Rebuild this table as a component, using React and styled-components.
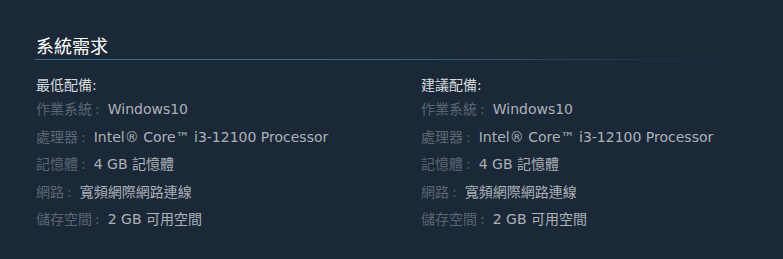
import React from "react";
import styled, { createGlobalStyle } from "styled-components";

const Global = createGlobalStyle`
  html, body {
    margin: 0;
    padding: 0;
    background: #1b2838;
  }
  body {
    font-family: "DejaVu Sans", "Noto Sans CJK TC", sans-serif;
    -webkit-font-smoothing: antialiased;
  }
`;

const Page = styled.div`
  width: 783px;
  height: 259px;
  background: #1b2838;
  padding: 33px 0 0 35px;
  box-sizing: border-box;
`;

const Heading = styled.h2`
  margin: 0 0 0 1px;
  font-family: "Noto Sans CJK TC", sans-serif;
  font-size: 18px;
  line-height: 24px;
  font-weight: 400;
  color: #ffffff;
`;

const Rule = styled.div`
  width: 705px;
  height: 1px;
  margin-top: 2px;
  background: linear-gradient(
    to right,
    #3a6e8e 0%,
    #336581 55%,
    rgba(40, 70, 95, 0.4) 85%,
    rgba(27, 40, 56, 0) 100%
  );
`;

const Columns = styled.div`
  display: grid;
  grid-template-columns: 385px 1fr;
  padding: 15px 0 0 1px;
`;

const Column = styled.div`
  display: flex;
  flex-direction: column;
`;

const Title = styled.div`
  font-size: 14px;
  line-height: 20px;
  color: #d6dadd;
  margin-bottom: 1px;
`;

const Row = styled.div`
  font-size: 14px;
  line-height: 27.5px;
  color: #acb2b8;
  white-space: nowrap;
`;

const Label = styled.span`
  color: #5b6773;
  margin-right: 8px;
`;

const Colon = styled.span`
  margin-left: 3px;
`;

const specs = [
  ["作業系統", "Windows10"],
  ["處理器", "Intel® Core™ i3-12100 Processor"],
  ["記憶體", "4 GB 記憶體"],
  ["網路", "寬頻網際網路連線"],
  ["儲存空間", "2 GB 可用空間"],
];

function SpecColumn({ title }) {
  return (
    <Column>
      <Title>{title}</Title>
      {specs.map(([k, v]) => (
        <Row key={k}>
          <Label>
            {k}
            <Colon>:</Colon>
          </Label>
          {v}
        </Row>
      ))}
    </Column>
  );
}

export default function App() {
  return (
    <Page>
      <Global />
      <Heading>系統需求</Heading>
      <Rule />
      <Columns>
        <SpecColumn title="最低配備:" />
        <SpecColumn title="建議配備:" />
      </Columns>
    </Page>
  );
}
